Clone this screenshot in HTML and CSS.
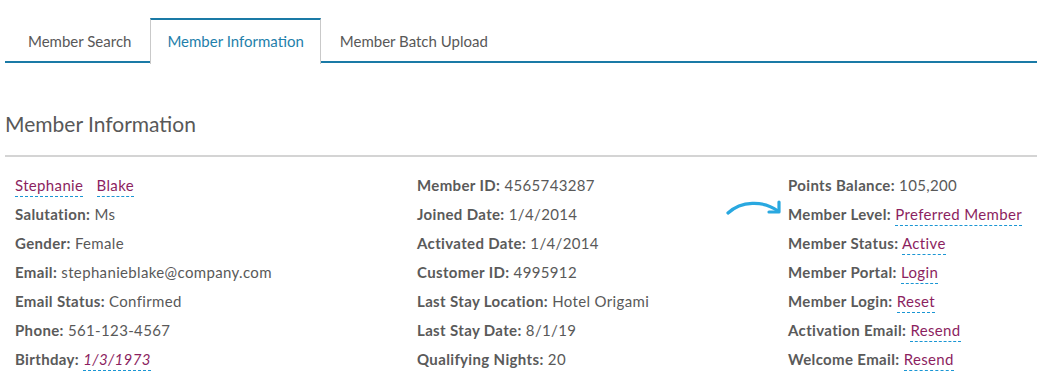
FILE: index.html
```html
<!DOCTYPE html>
<html lang="en">
<head>
  <meta charset="UTF-8" />
  <title>Member Information</title>
  <link rel="stylesheet" href="styles.css">
</head>
<body>
  <div class="page">
    <ul class="tabs">
      <li class="tab">Member Search</li>
      <li class="tab active">Member Information</li>
      <li class="tab">Member Batch Upload</li>
    </ul>

    <h2 class="title">Member Information</h2>

    <div class="info">
      <!-- personal -->
      <div class="col">
        <div class="row"><span class="link">Stephanie</span> <span class="link name-gap">Blake</span></div>
        <div class="row"><b>Salutation:</b> Ms</div>
        <div class="row"><b>Gender:</b> Female</div>
        <div class="row"><b>Email:</b> stephanieblake@company.com</div>
        <div class="row"><b>Email Status:</b> Confirmed</div>
        <div class="row"><b>Phone:</b> 561-123-4567</div>
        <div class="row"><b>Birthday:</b> <span class="link date">1/3/1973</span></div>
      </div>

      <!-- stay -->
      <div class="col">
        <div class="row"><b>Member ID:</b> 4565743287</div>
        <div class="row"><b>Joined Date:</b> 1/4/2014</div>
        <div class="row"><b>Activated Date:</b> 1/4/2014</div>
        <div class="row"><b>Customer ID:</b> 4995912</div>
        <div class="row"><b>Last Stay Location:</b> Hotel Origami</div>
        <div class="row"><b>Last Stay Date:</b> 8/1/19</div>
        <div class="row"><b>Qualifying Nights:</b> 20</div>
      </div>

      <!-- account -->
      <div class="col">
        <div class="row"><b>Points Balance:</b> 105,200</div>
        <div class="row">
          <svg class="arrow" width="58" height="22" viewBox="0 0 58 22">
            <path d="M3 15 C 16 3, 38 2, 53 13" fill="none" stroke="#29a8e0" stroke-width="3.2" stroke-linecap="round"/>
            <path d="M54 4 L 54 14 L 44 14" fill="none" stroke="#29a8e0" stroke-width="3.2" stroke-linecap="round" stroke-linejoin="round"/>
          </svg>
          <b>Member Level:</b> <span class="link">Preferred Member</span>
        </div>
        <div class="row"><b>Member Status:</b> <span class="link">Active</span></div>
        <div class="row"><b>Member Portal:</b> <span class="link">Login</span></div>
        <div class="row"><b>Member Login:</b> <span class="link">Reset</span></div>
        <div class="row"><b>Activation Email:</b> <span class="link">Resend</span></div>
        <div class="row"><b>Welcome Email:</b> <span class="link">Resend</span></div>
      </div>
    </div>
  </div>
</body>
</html>
```

FILE: styles.css
```css
* {
  margin: 0; padding: 0; box-sizing: border-box;
}

body {
  font-family: Lato, "Open Sans", sans-serif;
  color: #595959;
  background: #fff;
}

.page {
  padding: 18px 1px 0 5px;
}

.tabs {
  list-style: none;
  display: flex;
  padding-left: 6px;
  border-bottom: 2px solid #1a7aa6;
  height: 45px;
}

.tab {
  padding: 0 17px;
  margin-right: 2px;
  font-size: 15px;
  line-height: 46px;
  color: #585858;
}

.tab.active {
  color: #1f7fab;
  background: #fff;
  border: 1px solid #c9c9c9;
  border-top: 2px solid #1a7aa6;
  border-bottom: none;
  height: 46px;
  line-height: 42px;
  padding: 0 16px;
}

.title {
  font-size: 21px;
  font-weight: 400;
  color: #585858;
  margin-top: 48px;
  padding-bottom: 19px;
  border-bottom: 2px solid #d4d4d4;
}

.info {
  display: grid;
  grid-template-columns: 402px 371px 1fr;
  padding: 14px 10px 0;
}

.row {
  font-size: 15px;
  letter-spacing: 0.35px;
  line-height: 29px;
  height: 29px;
  white-space: nowrap;
  position: relative;
}

.row b {
  font-weight: 700;
  color: #5a5a5a;
}

.link {
  color: #8c1f5f;
  border-bottom: 1px dashed #1a96d4;
  padding-bottom: 2px;
}

.name-gap {
  margin-left: 9px;
}

.date {
  font-style: italic;
}

.arrow {
  position: absolute;
  left: -63px;
  top: -2px;
}
```
